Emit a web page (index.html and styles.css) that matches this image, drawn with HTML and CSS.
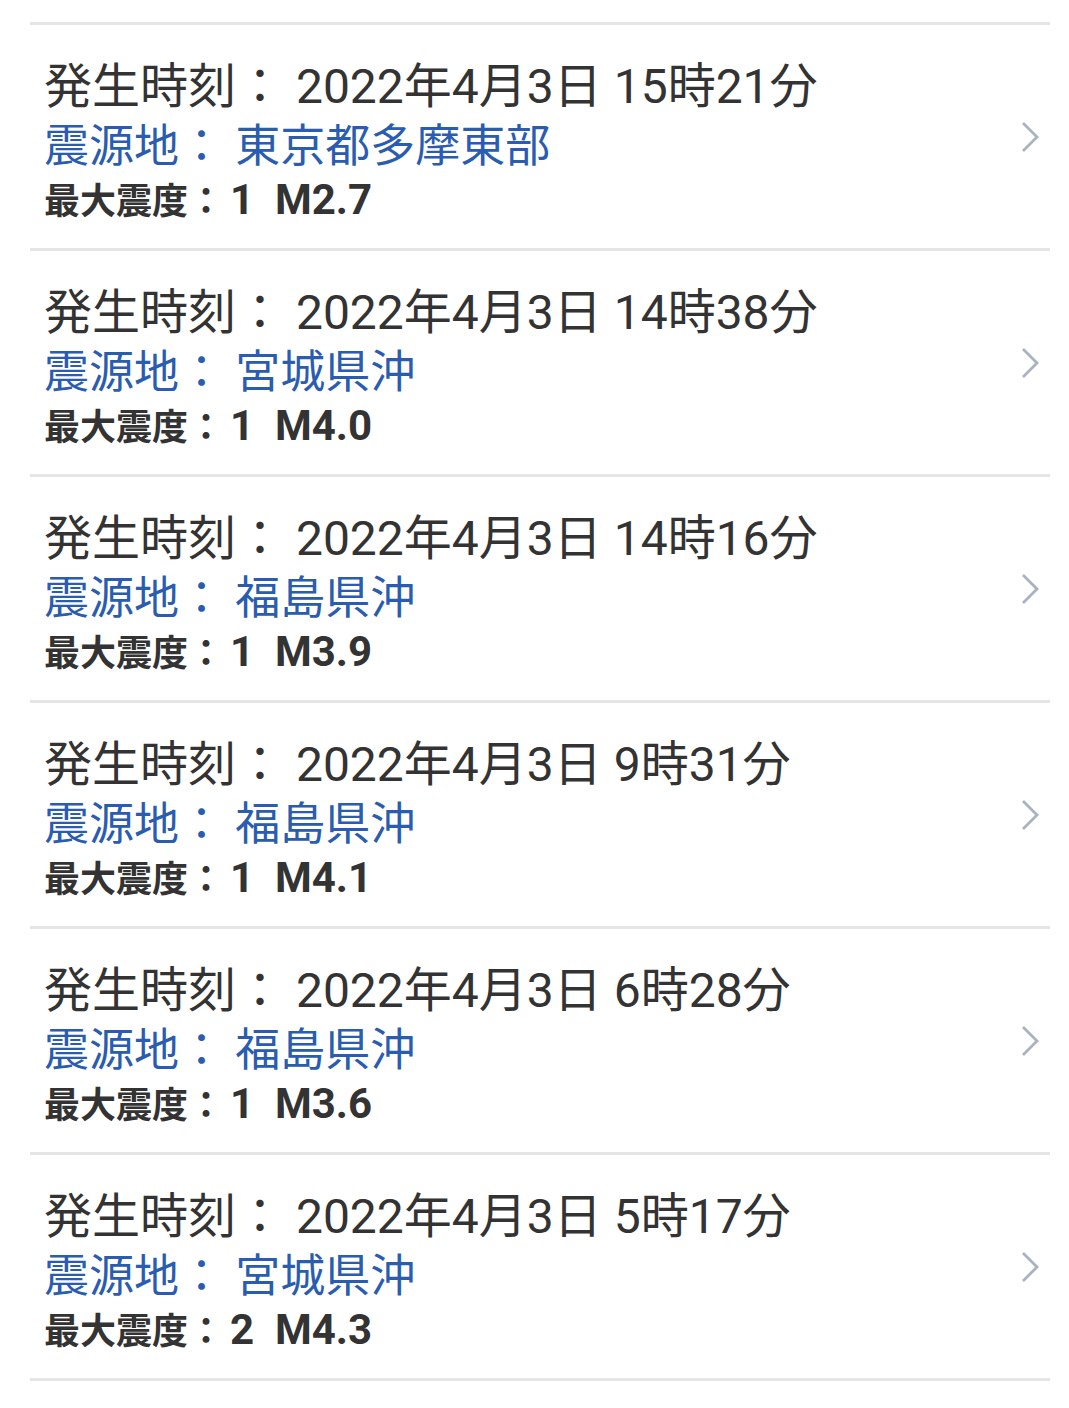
FILE: index.html
```html
<!DOCTYPE html>
<html lang="ja">
<head>
    <meta charset="utf-8">
    <meta name="viewport" content="width=device-width, initial-scale=1">
    <link rel="stylesheet" href="styles.css">
</head>
<body>

<!-- 地震情報の一覧 -->
<ul class="quakeList">
    <li class="quakeItem">
        <div class="quakeText">
            <div class="time">発生時刻： 2022年4月3日 15時21分</div>
            <div class="place">震源地： 東京都多摩東部</div>
            <div class="scale">最大震度：<span class="value">1&nbsp;&nbsp;M2.7</span></div>
        </div>
        <svg class="chevron" width="20" height="32" viewBox="0 0 20 32"><path d="M2 2 L16 16 L2 30" fill="none" stroke="#a9b3bf" stroke-width="2.8"/></svg>
    </li>
    <li class="quakeItem">
        <div class="quakeText">
            <div class="time">発生時刻： 2022年4月3日 14時38分</div>
            <div class="place">震源地： 宮城県沖</div>
            <div class="scale">最大震度：<span class="value">1&nbsp;&nbsp;M4.0</span></div>
        </div>
        <svg class="chevron" width="20" height="32" viewBox="0 0 20 32"><path d="M2 2 L16 16 L2 30" fill="none" stroke="#a9b3bf" stroke-width="2.8"/></svg>
    </li>
    <li class="quakeItem">
        <div class="quakeText">
            <div class="time">発生時刻： 2022年4月3日 14時16分</div>
            <div class="place">震源地： 福島県沖</div>
            <div class="scale">最大震度：<span class="value">1&nbsp;&nbsp;M3.9</span></div>
        </div>
        <svg class="chevron" width="20" height="32" viewBox="0 0 20 32"><path d="M2 2 L16 16 L2 30" fill="none" stroke="#a9b3bf" stroke-width="2.8"/></svg>
    </li>
    <li class="quakeItem">
        <div class="quakeText">
            <div class="time">発生時刻： 2022年4月3日 9時31分</div>
            <div class="place">震源地： 福島県沖</div>
            <div class="scale">最大震度：<span class="value">1&nbsp;&nbsp;M4.1</span></div>
        </div>
        <svg class="chevron" width="20" height="32" viewBox="0 0 20 32"><path d="M2 2 L16 16 L2 30" fill="none" stroke="#a9b3bf" stroke-width="2.8"/></svg>
    </li>
    <li class="quakeItem">
        <div class="quakeText">
            <div class="time">発生時刻： 2022年4月3日 6時28分</div>
            <div class="place">震源地： 福島県沖</div>
            <div class="scale">最大震度：<span class="value">1&nbsp;&nbsp;M3.6</span></div>
        </div>
        <svg class="chevron" width="20" height="32" viewBox="0 0 20 32"><path d="M2 2 L16 16 L2 30" fill="none" stroke="#a9b3bf" stroke-width="2.8"/></svg>
    </li>
    <li class="quakeItem">
        <div class="quakeText">
            <div class="time">発生時刻： 2022年4月3日 5時17分</div>
            <div class="place">震源地： 宮城県沖</div>
            <div class="scale">最大震度：<span class="value">2&nbsp;&nbsp;M4.3</span></div>
        </div>
        <svg class="chevron" width="20" height="32" viewBox="0 0 20 32"><path d="M2 2 L16 16 L2 30" fill="none" stroke="#a9b3bf" stroke-width="2.8"/></svg>
    </li>
</ul>

</body>
</html>
```

FILE: styles.css
```css
* {
    box-sizing: border-box;
}

body {
    margin: 0;
    background: #ffffff;
    font-family: "Roboto", "Noto Sans CJK JP", sans-serif;
    color: #333333;
}

/* zoznam */
.quakeList {
    list-style: none;
    margin: 0 19px 0 30px;
    padding: 22px 0 0 0;
    border-bottom: 3px solid #e5e5e5;
}

.quakeItem {
    display: flex;
    align-items: center;
    justify-content: space-between;
    border-top: 3px solid #e5e5e5;
    padding: 32px 9px 21px 14px;
}

.time {
    font-size: 48px;
    line-height: 60px;
    color: #333333;
    white-space: nowrap;
}

.place {
    font-size: 45px;
    line-height: 60px;
    color: #2a5cb0;
    white-space: nowrap;
}

.scale {
    font-size: 36px;
    line-height: 50px;
    height: 50px;
    font-weight: bold;
    color: #333333;
    white-space: nowrap;
}

.scale .value {
    font-size: 42px;
    line-height: 36px;
    margin-left: 6px;
}

.chevron {
    display: block;
    flex-shrink: 0;
    margin-bottom: 11px;
}
```
